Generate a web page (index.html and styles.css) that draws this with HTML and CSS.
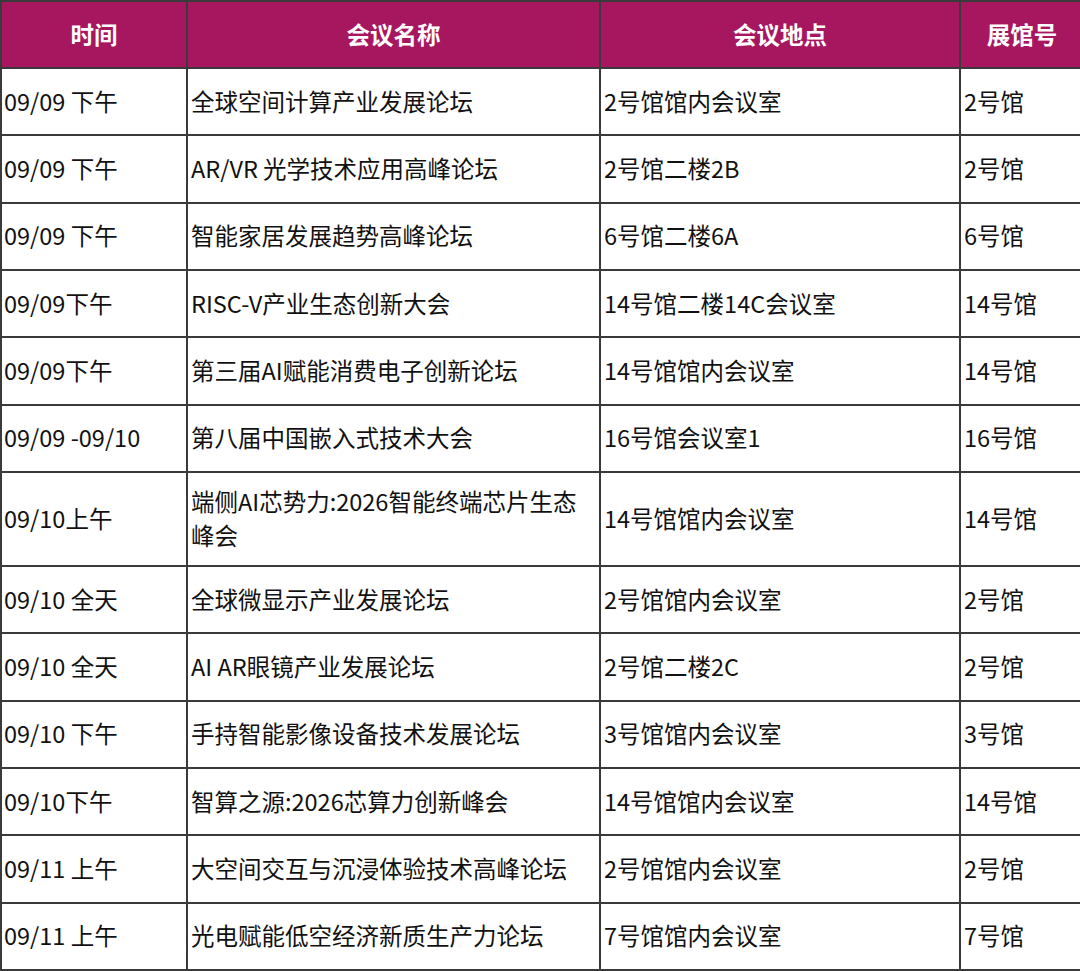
FILE: index.html
```html
<!DOCTYPE html>
<html lang="zh">
<head>
<meta charset="utf-8">
<link rel="stylesheet" href="styles.css">
</head>
<body>
<table class="schedule">
  <colgroup>
    <col class="c-time">
    <col class="c-name">
    <col class="c-place">
    <col class="c-hall">
  </colgroup>
  <thead>
    <tr><th>时间</th><th>会议名称</th><th>会议地点</th><th>展馆号</th></tr>
  </thead>
  <tbody>
    <tr><td>09/09 下午</td><td>全球空间计算产业发展论坛</td><td>2号馆馆内会议室</td><td>2号馆</td></tr>
    <tr><td>09/09 下午</td><td>AR/VR 光学技术应用高峰论坛</td><td>2号馆二楼2B</td><td>2号馆</td></tr>
    <tr><td>09/09 下午</td><td>智能家居发展趋势高峰论坛</td><td>6号馆二楼6A</td><td>6号馆</td></tr>
    <tr><td>09/09下午</td><td>RISC-V产业生态创新大会</td><td>14号馆二楼14C会议室</td><td>14号馆</td></tr>
    <tr><td>09/09下午</td><td>第三届AI赋能消费电子创新论坛</td><td>14号馆馆内会议室</td><td>14号馆</td></tr>
    <tr><td>09/09 -09/10</td><td>第八届中国嵌入式技术大会</td><td>16号馆会议室1</td><td>16号馆</td></tr>
    <tr class="tall"><td>09/10上午</td><td>端侧AI芯势力:2026智能终端芯片生态峰会</td><td>14号馆馆内会议室</td><td>14号馆</td></tr>
    <tr><td>09/10 全天</td><td>全球微显示产业发展论坛</td><td>2号馆馆内会议室</td><td>2号馆</td></tr>
    <tr><td>09/10 全天</td><td>AI AR眼镜产业发展论坛</td><td>2号馆二楼2C</td><td>2号馆</td></tr>
    <tr><td>09/10 下午</td><td>手持智能影像设备技术发展论坛</td><td>3号馆馆内会议室</td><td>3号馆</td></tr>
    <tr><td>09/10下午</td><td>智算之源:2026芯算力创新峰会</td><td>14号馆馆内会议室</td><td>14号馆</td></tr>
    <tr><td>09/11 上午</td><td>大空间交互与沉浸体验技术高峰论坛</td><td>2号馆馆内会议室</td><td>2号馆</td></tr>
    <tr><td>09/11 上午</td><td>光电赋能低空经济新质生产力论坛</td><td>7号馆馆内会议室</td><td>7号馆</td></tr>
  </tbody>
</table>
</body>
</html>
```
FILE: styles.css
```css
html, body {
  margin: 0;
  padding: 0;
  background: #ffffff;
  overflow: hidden;
}
body {
  width: 1080px;
  height: 971px;
  font-family: "Noto Sans CJK SC", "Noto Sans", sans-serif;
  color: #111111;
}
.schedule {
  border-collapse: collapse;
  table-layout: fixed;
  width: 1083px;
  font-size: 23.5px;
}
.c-time { width: 186px; }
.c-name { width: 413px; }
.c-place { width: 360px; }
.c-hall { width: 124px; }
.schedule th,
.schedule td {
  border: 2px solid #3a3a3a;
  vertical-align: middle;
  line-height: 34px;
  padding: 11px 3px 13px;
  height: 41.33px;
}
.schedule th {
  background: #a6175f;
  color: #ffffff;
  font-weight: 700;
  text-align: center;
  height: 41px;
}
.schedule td {
  text-align: left;
  font-weight: 400;
}
.schedule td:first-child {
  padding-left: 2px;
}
```
